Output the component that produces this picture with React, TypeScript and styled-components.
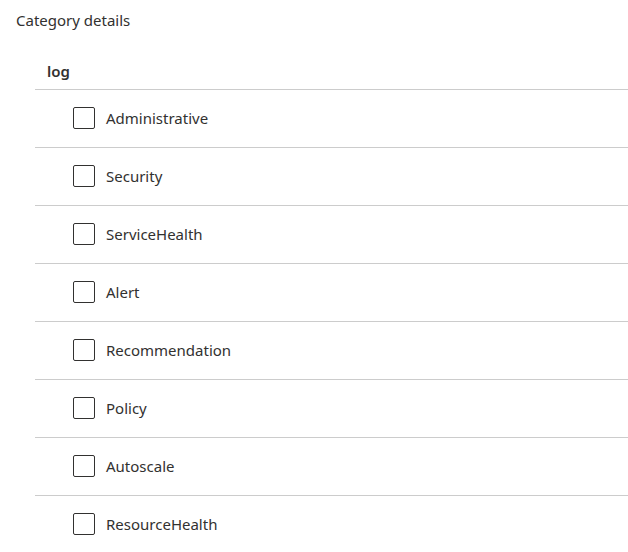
import styled, { createGlobalStyle } from 'styled-components'

const GlobalStyle = createGlobalStyle`
  body {
    margin: 0;
    background: #ffffff;
    font-family: 'Noto Sans', 'Open Sans', sans-serif;
    color: #323130;
  }
`

const Page = styled.div`
  width: 628px;
  height: 552px;
  overflow: hidden;
`

const Title = styled.div`
  padding: 10px 0 0 16px;
  font-size: 15px;
  line-height: 20px;
  color: #323130;
`

const Table = styled.div`
  margin-left: 35px;
  display: flex;
  flex-direction: column;
`

const HeaderRow = styled.div`
  padding: 31px 0 8px 12px;
  font-size: 15px;
  line-height: 20px;
  font-weight: 600;
  color: #323130;
  border-bottom: 1px solid #cccccc;
`

const Row = styled.label`
  display: flex;
  align-items: center;
  gap: 11px;
  height: 58px;
  box-sizing: border-box;
  padding: 0 0 2px 38px;
  border-bottom: 1px solid #cccccc;
  font-size: 15px;
  color: #323130;
`

const Box = styled.span`
  width: 20px;
  height: 20px;
  border: 1px solid #323130;
  border-radius: 2px;
  flex-shrink: 0;
`

const categories = [
  'Administrative',
  'Security',
  'ServiceHealth',
  'Alert',
  'Recommendation',
  'Policy',
  'Autoscale',
  'ResourceHealth',
]

export default function App() {
  return (
    <Page>
      <GlobalStyle />
      <Title>Category details</Title>
      <Table>
        <HeaderRow>log</HeaderRow>
        {categories.map((c) => (
          <Row key={c}>
            <Box />
            {c}
          </Row>
        ))}
      </Table>
    </Page>
  )
}
